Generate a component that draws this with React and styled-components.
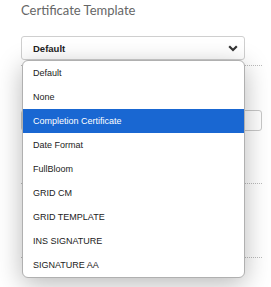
import styled, { createGlobalStyle } from "styled-components";

const options = [
  "Default",
  "None",
  "Completion Certificate",
  "Date Format",
  "FullBloom",
  "GRID CM",
  "GRID TEMPLATE",
  "INS SIGNATURE",
  "SIGNATURE AA",
];

const App = () => {
  return (
    <>
      <GlobalStyle />
      <Page>
        <Title>Certificate Template</Title>
        <SelectBox>
          <SelectValue>Default</SelectValue>
          <svg width="10" height="7" viewBox="0 0 10 7">
            <path d="M1.2 1.3 L5 5 L8.8 1.3" fill="none" stroke="#333" strokeWidth="2.2" />
          </svg>
        </SelectBox>
        <Section $height={6} />
        <Section $height={74}>
          <TextInput />
        </Section>
        <Section $height={74} />
        <Section $height={73} />

        <Dropdown>
          {options.map((option, index) => (
            <Option key={option} $selected={index === 2}>
              {option}
            </Option>
          ))}
        </Dropdown>
      </Page>
    </>
  );
};

export default App;

const GlobalStyle = createGlobalStyle`
  body {
    margin: 0;
    background: #fff;
    font-family: "Liberation Sans", Arial, sans-serif;
  }
`;

const Page = styled.div`
  position: relative;
  height: 287px;
  overflow: hidden;
  padding: 0 9px 0 21px;
`;

const Title = styled.div`
  font-family: Lato, "Open Sans", sans-serif;
  font-size: 13px;
  color: #666;
  padding-top: 2px;
  height: 34px;
  line-height: 16px;
`;

const SelectBox = styled.div`
  display: flex;
  align-items: center;
  justify-content: space-between;
  box-sizing: border-box;
  width: 224px;
  height: 24px;
  padding: 0 6px 0 11px;
  border: 1px solid #cfcfcf;
  border-radius: 3px;
  background: #fff;
`;

const SelectValue = styled.span`
  font-size: 9.5px;
  font-weight: bold;
  color: #222;
`;

const Section = styled.div`
  height: ${(p) => p.$height}px;
  border-bottom: 1px dotted #bbb;
  box-sizing: border-box;
`;

const TextInput = styled.div`
  margin-top: 44px;
  width: 241px;
  height: 21px;
  box-sizing: border-box;
  border: 1px solid #c8c8c8;
  border-radius: 3px;
`;

const Dropdown = styled.div`
  position: absolute;
  left: 22px;
  top: 60px;
  width: 223px;
  box-sizing: border-box;
  background: #fff;
  border: 1px solid #b0b0b0;
  border-radius: 6px;
  overflow: hidden;
  box-shadow: 0 6px 26px rgba(0, 0, 0, 0.28);
`;

const Option = styled.div`
  height: 24px;
  line-height: 24px;
  padding-left: 10px;
  font-size: 9px;
  color: ${(p) => (p.$selected ? "#fff" : "#222")};
  background: ${(p) => (p.$selected ? "#1967d2" : "transparent")};
`;
